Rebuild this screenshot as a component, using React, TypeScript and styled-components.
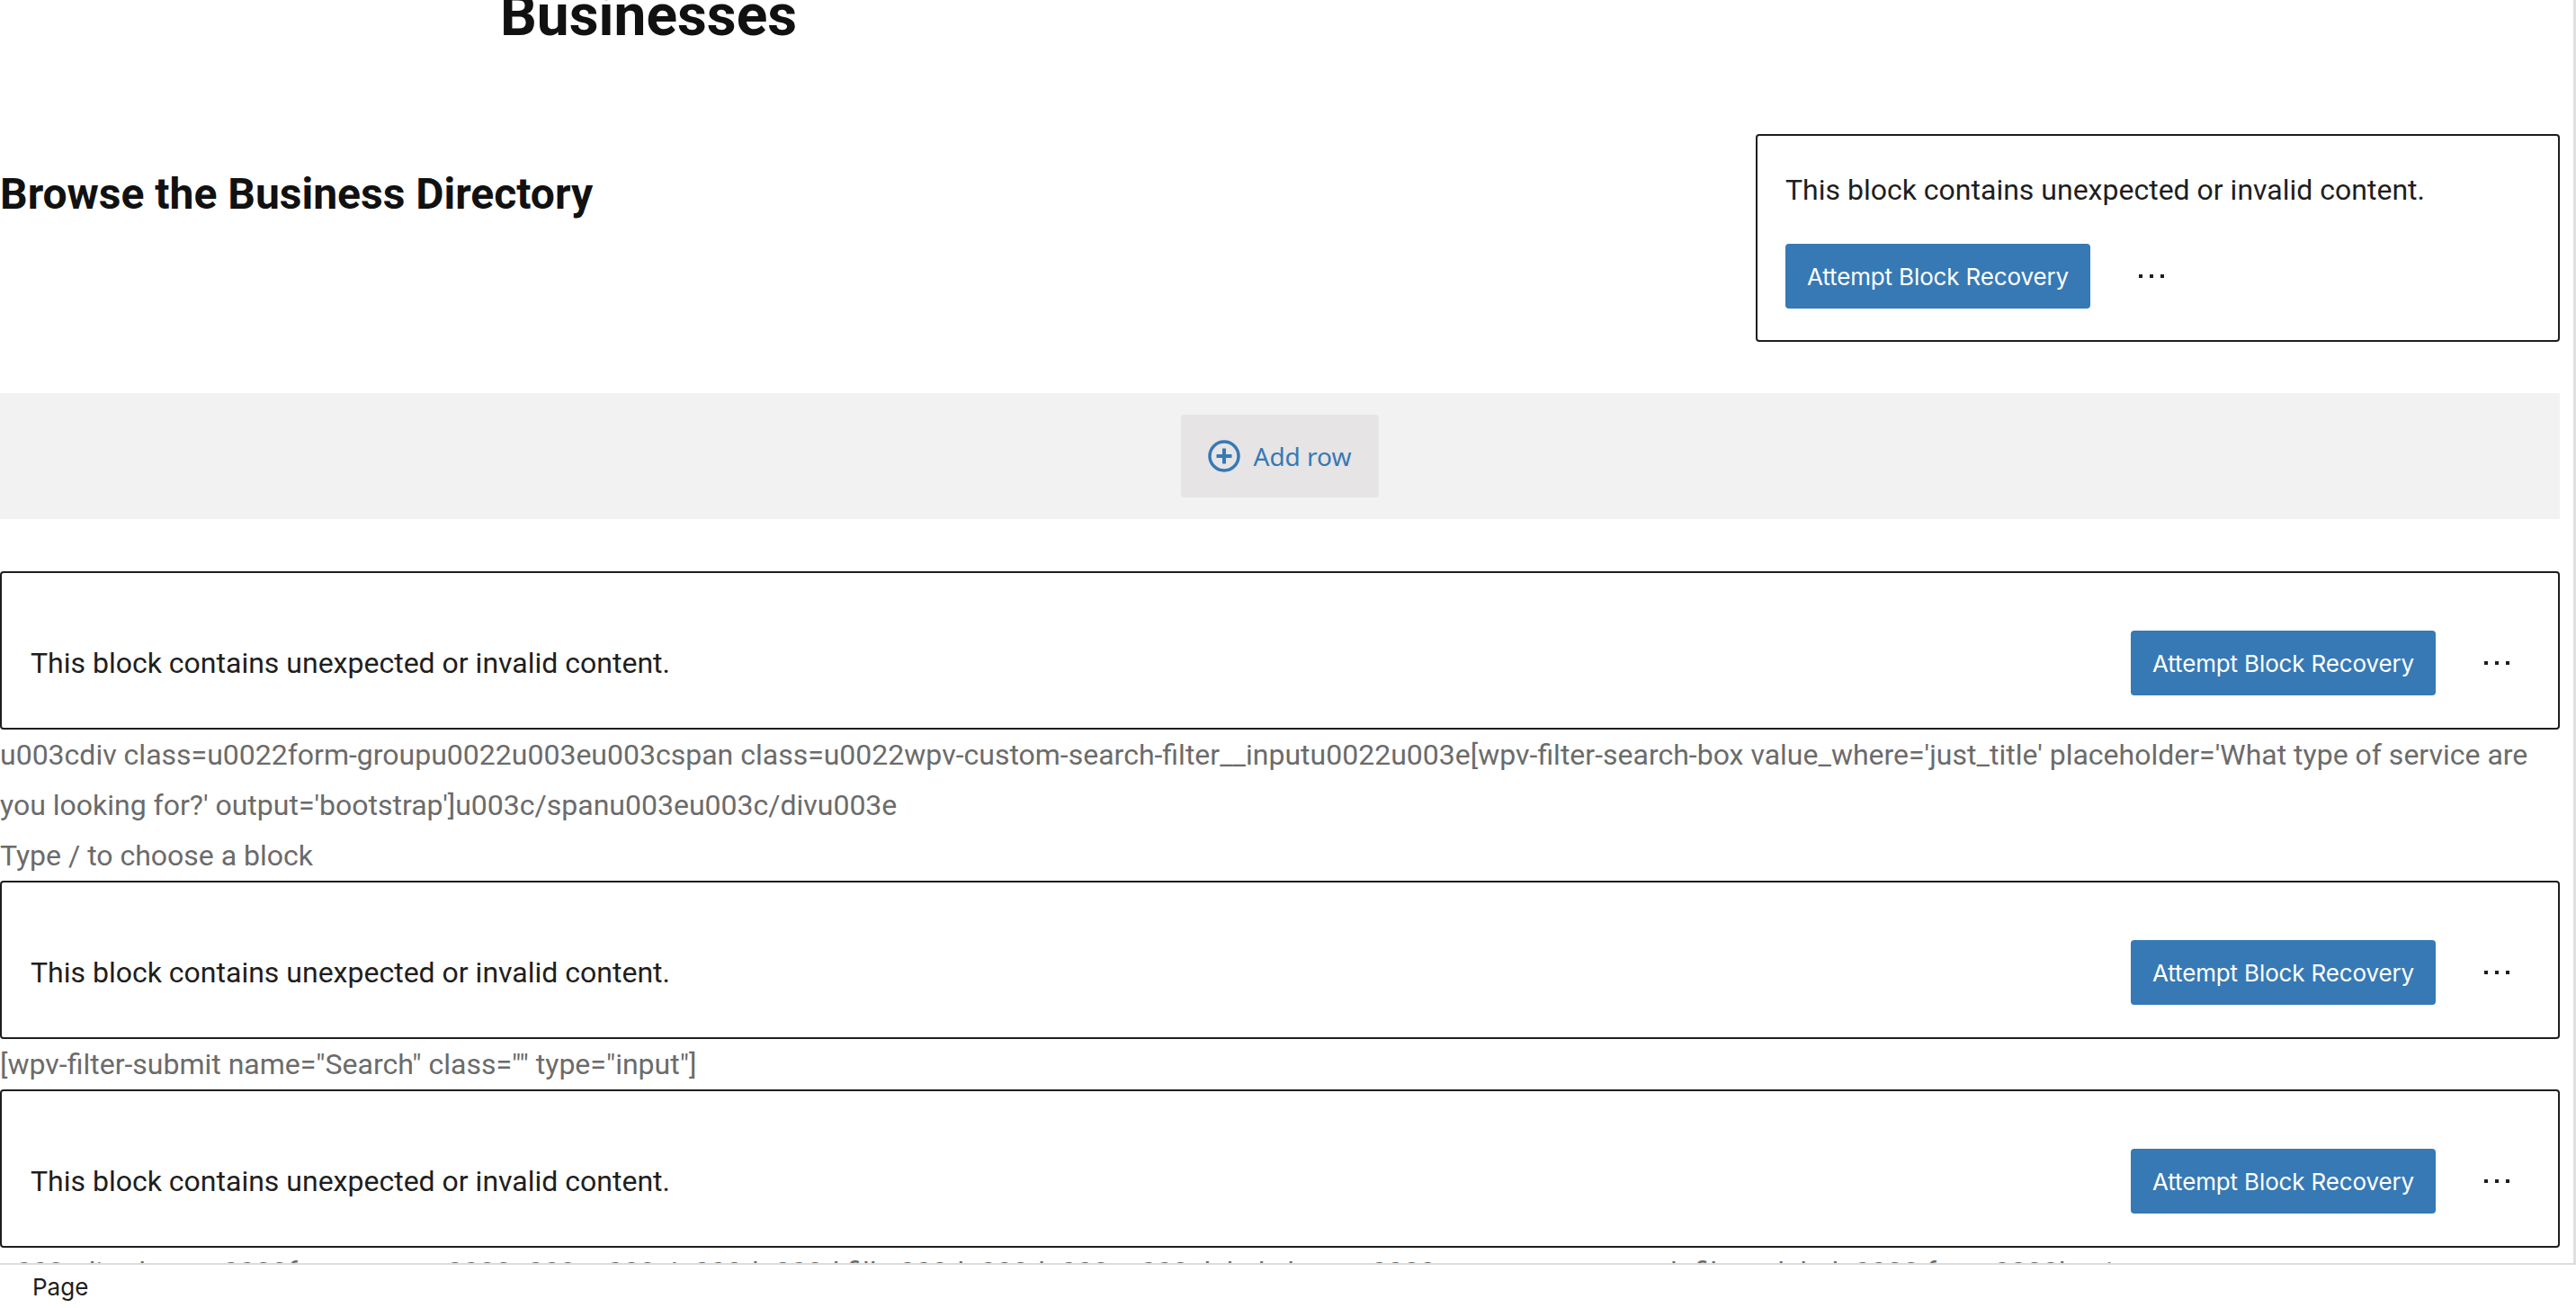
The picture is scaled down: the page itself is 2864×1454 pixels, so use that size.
import styled, { createGlobalStyle } from "styled-components";

const GlobalStyle = createGlobalStyle`
  html, body {
    margin: 0;
    padding: 0;
    height: 100%;
    overflow: hidden;
    background: #fff;
    font-family: Roboto, "Liberation Sans", sans-serif;
  }
`;

const Screen = styled.div`
  width: 2864px;
  height: 1454px;
  overflow: hidden;
  display: flex;
  flex-direction: column;
  background: #fff;
`;

const Scroller = styled.main`
  flex: 1;
  min-height: 0;
  overflow: hidden;
  padding-right: 15px;
  border-right: 3px solid #e0e0e0;
  box-sizing: border-box;
`;

const PageTitle = styled.h1`
  margin: -26px 0 0 556px;
  height: 103px;
  font-size: 64px;
  line-height: 88px;
  font-weight: 700;
  color: #111;
`;

const IntroRow = styled.section`
  display: flex;
  justify-content: space-between;
  align-items: flex-start;
  margin-top: 72px;
`;

const SectionTitle = styled.h2`
  margin: 34px 0 0;
  font-size: 48px;
  line-height: 66px;
  font-weight: 700;
  color: #111;
`;

const Warning = styled.div<{ $stacked?: boolean }>`
  box-sizing: border-box;
  height: ${(p) => (p.$stacked ? 231 : 176)}px;
  width: ${(p) => (p.$stacked ? "894px" : "100%")};
  padding: ${(p) => (p.$stacked ? "32px 31px" : "28px 54px 0 32px")};
  border: 2px solid #1e1e1e;
  border-radius: 4px;
  background: #fff;
  display: flex;
  flex-direction: ${(p) => (p.$stacked ? "column" : "row")};
  justify-content: ${(p) => (p.$stacked ? "flex-start" : "space-between")};
  align-items: ${(p) => (p.$stacked ? "flex-start" : "center")};
  gap: ${(p) => (p.$stacked ? "32px" : "0")};
`;

const WarningText = styled.p`
  margin: 0;
  font-size: 32px;
  line-height: 56px;
  color: #1e1e1e;
`;

const Actions = styled.div`
  display: flex;
  align-items: center;
  gap: 54px;
`;

const RecoverButton = styled.button`
  width: 339px;
  height: 72px;
  padding: 0;
  border: 0;
  border-radius: 4px;
  background: #3679b5;
  color: #fff;
  font-family: Inter, Roboto, sans-serif;
  font-size: 26px;
  letter-spacing: -0.14px;
`;

const MoreButton = styled.span`
  display: flex;
  gap: 8px;
`;

const Dot = styled.i`
  width: 4px;
  height: 4px;
  background: #1e1e1e;
`;

const AddRowBand = styled.div`
  height: 140px;
  margin-top: 57px;
  background: #f2f2f2;
  display: flex;
  justify-content: center;
  align-items: center;
`;

const AddRowButton = styled.button`
  width: 220px;
  height: 92px;
  padding: 0;
  border: 0;
  border-radius: 4px;
  background: #e6e4e5;
  color: #3679b5;
  font-family: "Noto Sans", sans-serif;
  font-size: 28px;
  display: flex;
  justify-content: center;
  align-items: center;
  gap: 14px;
`;

const Blocks = styled.section`
  margin-top: 58px;
`;

const Paragraph = styled.p`
  margin: 0;
  font-size: 32px;
  line-height: 56px;
  color: #6b6b6b;
`;

/* only the tops of this line show above the footer */
const ClippedParagraph = styled(Paragraph)`
  margin-top: -1px;
`;

const Footer = styled.footer`
  height: 50px;
  box-sizing: border-box;
  padding-left: 36px;
  border-top: 2px solid #ddd;
  background: #fff;
  color: #1e1e1e;
  font-family: Inter, Roboto, sans-serif;
  font-size: 26px;
  line-height: 50px;
`;

const BlockWarning = ({ stacked }: { stacked?: boolean }) => (
  <Warning $stacked={stacked}>
    <WarningText>This block contains unexpected or invalid content.</WarningText>
    <Actions>
      <RecoverButton>Attempt Block Recovery</RecoverButton>
      <MoreButton>
        <Dot />
        <Dot />
        <Dot />
      </MoreButton>
    </Actions>
  </Warning>
);

const PlusCircle = () => (
  <svg width="36" height="36" viewBox="0 0 36 36" fill="none" stroke="currentColor">
    <circle cx="18" cy="18" r="16" strokeWidth="3.5" />
    <path d="M18 9.5v17M9.5 18h17" strokeWidth="4" />
  </svg>
);

export default function App() {
  return (
    <Screen>
      <GlobalStyle />
      <Scroller>
        <PageTitle>Businesses</PageTitle>
        <IntroRow>
          <SectionTitle>Browse the Business Directory</SectionTitle>
          <BlockWarning stacked />
        </IntroRow>
        <AddRowBand>
          <AddRowButton>
            <PlusCircle />
            Add row
          </AddRowButton>
        </AddRowBand>
        <Blocks>
          <BlockWarning />
          <Paragraph>
            u003cdiv class=u0022form-groupu0022u003eu003cspan class=u0022wpv-custom-search-filter__inputu0022u003e[wpv-filter-search-box value_where='just_title' placeholder='What type of service are you looking for?' output='bootstrap']u003c/spanu003eu003c/divu003e
          </Paragraph>
          <Paragraph>Type / to choose a block</Paragraph>
          <BlockWarning />
          <Paragraph>[wpv-filter-submit name="Search" class="" type="input"]</Paragraph>
          <BlockWarning />
          <ClippedParagraph>
            u003cdiv class=u0022form-groupu0022u003eu003c!u002du002d fill u002du002du003eu003clabel class=u0022wpv-custom-search-filter__labelu0022 for=u0022business
          </ClippedParagraph>
        </Blocks>
      </Scroller>
      <Footer>Page</Footer>
    </Screen>
  );
}
